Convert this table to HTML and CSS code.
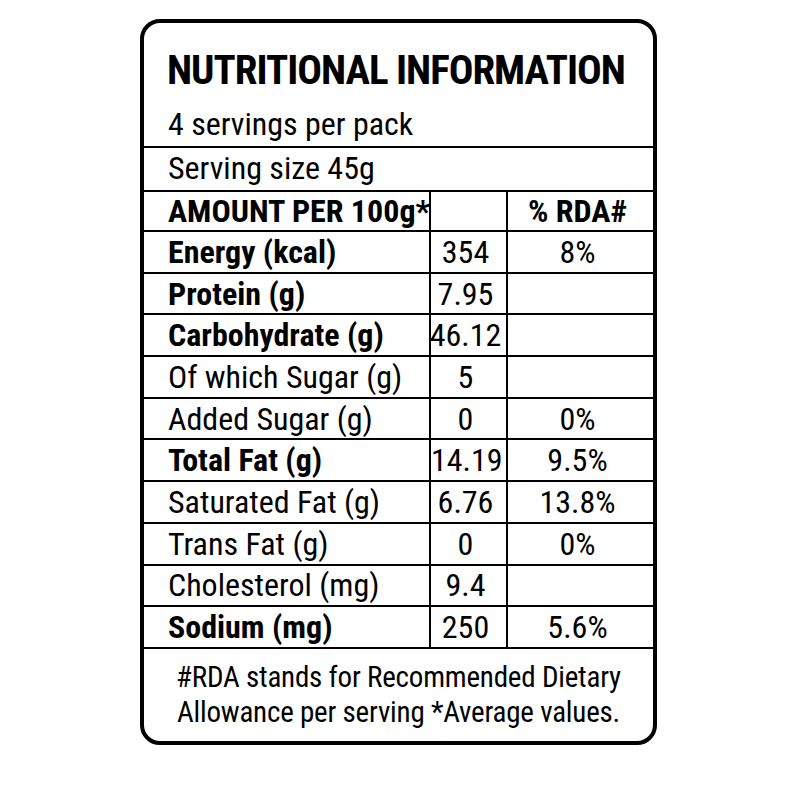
FILE: index.html
```html
<!DOCTYPE html>
<html lang="en">
<head>
<meta charset="utf-8">
<title>Nutritional Information</title>
<link rel="stylesheet" href="styles.css">
</head>
<body>
<div class="label">
  <h1 class="title">NUTRITIONAL INFORMATION</h1>
  <div class="line servings">4 servings per pack</div>
  <div class="line size">Serving size 45g</div>
  <table class="facts">
    <colgroup><col class="c1"><col class="c2"><col class="c3"></colgroup>
    <thead>
      <tr class="head"><th class="name">AMOUNT PER 100g*</th><th class="val"></th><th class="rda">% RDA#</th></tr>
    </thead>
    <tbody>
      <tr class="bold"><td class="name">Energy (kcal)</td><td class="val">354</td><td class="rda">8%</td></tr>
      <tr class="bold"><td class="name">Protein (g)</td><td class="val">7.95</td><td class="rda"></td></tr>
      <tr class="bold"><td class="name">Carbohydrate (g)</td><td class="val"><span>46.12</span></td><td class="rda"></td></tr>
      <tr><td class="name">Of which Sugar (g)</td><td class="val">5</td><td class="rda"></td></tr>
      <tr><td class="name">Added Sugar (g)</td><td class="val">0</td><td class="rda">0%</td></tr>
      <tr class="bold"><td class="name">Total Fat (g)</td><td class="val">14.19</td><td class="rda">9.5%</td></tr>
      <tr><td class="name">Saturated Fat (g)</td><td class="val">6.76</td><td class="rda">13.8%</td></tr>
      <tr><td class="name">Trans Fat (g)</td><td class="val">0</td><td class="rda">0%</td></tr>
      <tr><td class="name">Cholesterol (mg)</td><td class="val">9.4</td><td class="rda"></td></tr>
      <tr class="bold"><td class="name">Sodium (mg)</td><td class="val">250</td><td class="rda">5.6%</td></tr>
    </tbody>
  </table>
  <p class="note">#RDA stands for Recommended Dietary<br>Allowance per serving *Average values.</p>
</div>
</body>
</html>
```

FILE: styles.css
```css
* { box-sizing: border-box; }
html, body { margin: 0; padding: 0; background: #fff; }
body {
  font-family: "Roboto Condensed", "Roboto", sans-serif;
  font-stretch: 75%;
  color: #000;
}
.label {
  margin: 19px 0 0 140px;
  width: 517px;
  height: 726px;
  border: 4px solid #000;
  border-radius: 20px;
  overflow: hidden;
  display: flex;
  flex-direction: column;
}
.title {
  margin: 0;
  padding: 23px 0 0 23px;
  height: 77px;
  font-size: 41px;
  font-weight: 700;
  line-height: 48px;
  letter-spacing: -1px;
  white-space: nowrap;
}
.line {
  font-size: 32px;
  line-height: 38px;
  padding-left: 24px;
  white-space: nowrap;
}
.servings {
  height: 48px;
  padding-top: 5px;
  border-bottom: 2px solid #000;
}
.size {
  height: 42px;
  padding-top: 1px;
}
.facts {
  width: 100%;
  border-collapse: collapse;
  table-layout: fixed;
  font-size: 32px;
}
.c1 { width: 286px; }
.c2 { width: 77px; }
.facts tr { border-top: 2px solid #000; height: 41.7px; }
.facts tr.head { height: 39px; }
.facts tbody tr:last-child { border-bottom: 2px solid #000; }
.facts th, .facts td {
  padding: 0;
  line-height: 38px;
  vertical-align: middle;
  white-space: nowrap;
}
.facts th { font-weight: 700; font-size: 32px; }
.facts td + td, .facts th + th { border-left: 2px solid #000; }
.facts .name { text-align: left; padding-left: 24px; }
.facts .val { text-align: center; padding-right: 6px; }
.facts .val span { display: inline-block; margin: 0 -12px; }
.facts .rda { text-align: center; padding-right: 6px; }
.facts tr.bold .name { font-weight: 700; }
.note {
  margin: 0;
  padding-top: 11px;
  font-size: 29px;
  line-height: 35px;
  letter-spacing: -0.2px;
  text-align: center;
  white-space: nowrap;
}
```
